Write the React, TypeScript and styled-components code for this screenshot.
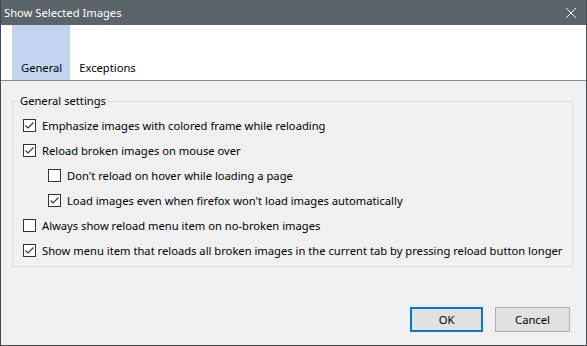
import * as React from 'react'
import styled, { createGlobalStyle } from 'styled-components'

const GlobalStyle = createGlobalStyle`
  html, body {
    margin: 0;
    padding: 0;
    background: #f0f0f0;
  }
  * {
    box-sizing: border-box;
  }
`

const font = `'Noto Sans', 'Open Sans', sans-serif`
const size = '11.2px'

const Window = styled.div`
  width: 587px;
  height: 346px;
  display: flex;
  flex-direction: column;
  border: 1px solid #464b4f;
  border-top: none;
  background: #f0f0f0;
  font-family: ${font};
  font-size: ${size};
  color: #000;
  overflow: hidden;
`

const TitleBar = styled.div`
  height: 25px;
  flex: none;
  display: flex;
  align-items: center;
  justify-content: space-between;
  background: #5b6469;
  color: #fff;
  padding: 0 9px 0 3px;
  margin: 0 -1px;
  border-left: 1px solid #464b4f;
  border-right: 1px solid #464b4f;
`

const Title = styled.span`
  font-size: ${size};
  line-height: 25px;
`

const CloseButton = styled.span`
  display: flex;
  width: 12px;
  height: 12px;
`

const TabStrip = styled.div`
  height: 56px;
  flex: none;
  display: flex;
  align-items: flex-end;
  background: #fff;
  border-bottom: 1px solid #8a8a8a;
  padding-left: 11px;
`

const Tab = styled.div<{ $active?: boolean }>`
  height: 100%;
  display: flex;
  align-items: flex-end;
  padding: 0 ${p => (p.$active ? '8px' : '10px')} 4px 9px;
  background: ${p => (p.$active ? '#c3d5ee' : 'transparent')};
  line-height: 16px;
`

const Body = styled.div`
  flex: 1;
  display: flex;
  flex-direction: column;
  padding: 12px 13px 13px 11px;
`

const Group = styled.fieldset`
  margin: 0;
  min-width: 0;
  width: 561px;
  padding: 10px 0 0 10px;
  height: 174px;
  border: 1px solid #dcdcdc;
  display: flex;
  flex-direction: column;
  gap: 12px;
`

const Legend = styled.legend`
  padding: 0 1px;
  margin-left: -4px;
  line-height: 16px;
`

const Row = styled.label<{ $indent?: boolean }>`
  display: flex;
  align-items: center;
  gap: 6px;
  height: 13px;
  margin-left: ${p => (p.$indent ? '25px' : '0')};
  white-space: nowrap;
`

const Box = styled.span`
  width: 13px;
  height: 13px;
  flex: none;
  border: 1px solid #333;
  background: #fff;
  display: flex;
`

const Footer = styled.div`
  margin-top: auto;
  display: flex;
  justify-content: flex-end;
  gap: 12px;
  padding-right: 3px;
`

const Button = styled.button<{ $primary?: boolean }>`
  width: ${p => (p.$primary ? '73px' : '75px')};
  height: 25px;
  font-family: ${font};
  font-size: ${size};
  color: #000;
  background: #e1e1e1;
  border: ${p => (p.$primary ? '2px solid #0078d7' : '1px solid #adadad')};
  padding: 0;
`

const Check = ({ checked }: { checked: boolean }) => (
  <Box>
    {checked && (
      <svg width="11" height="11" viewBox="0 0 11 11">
        <path d="M1.5 5.5 L4 8 L9.5 2.5" fill="none" stroke="#333" strokeWidth="1.1" />
      </svg>
    )}
  </Box>
)

const options = [
  { label: 'Emphasize images with colored frame while reloading', checked: true },
  { label: 'Reload broken images on mouse over', checked: true },
  { label: "Don't reload on hover while loading a page", checked: false, indent: true },
  { label: "Load images even when firefox won't load images automatically", checked: true, indent: true },
  { label: 'Always show reload menu item on no-broken images', checked: false },
  {
    label: 'Show menu item that reloads all broken images in the current tab by pressing reload button longer',
    checked: true,
  },
]

export default function App() {
  return (
    <>
      <GlobalStyle />
      <Window>
        <TitleBar>
          <Title>Show Selected Images</Title>
          <CloseButton>
            <svg width="12" height="12" viewBox="0 0 12 12">
              <path d="M1 1 L11 11 M11 1 L1 11" stroke="#fff" strokeWidth="1" />
            </svg>
          </CloseButton>
        </TitleBar>
        <TabStrip>
          <Tab $active>General</Tab>
          <Tab>Exceptions</Tab>
        </TabStrip>
        <Body>
          <Group>
            <Legend>General settings</Legend>
            {options.map(o => (
              <Row key={o.label} $indent={o.indent}>
                <Check checked={o.checked} />
                {o.label}
              </Row>
            ))}
          </Group>
          <Footer>
            <Button $primary>OK</Button>
            <Button>Cancel</Button>
          </Footer>
        </Body>
      </Window>
    </>
  )
}
